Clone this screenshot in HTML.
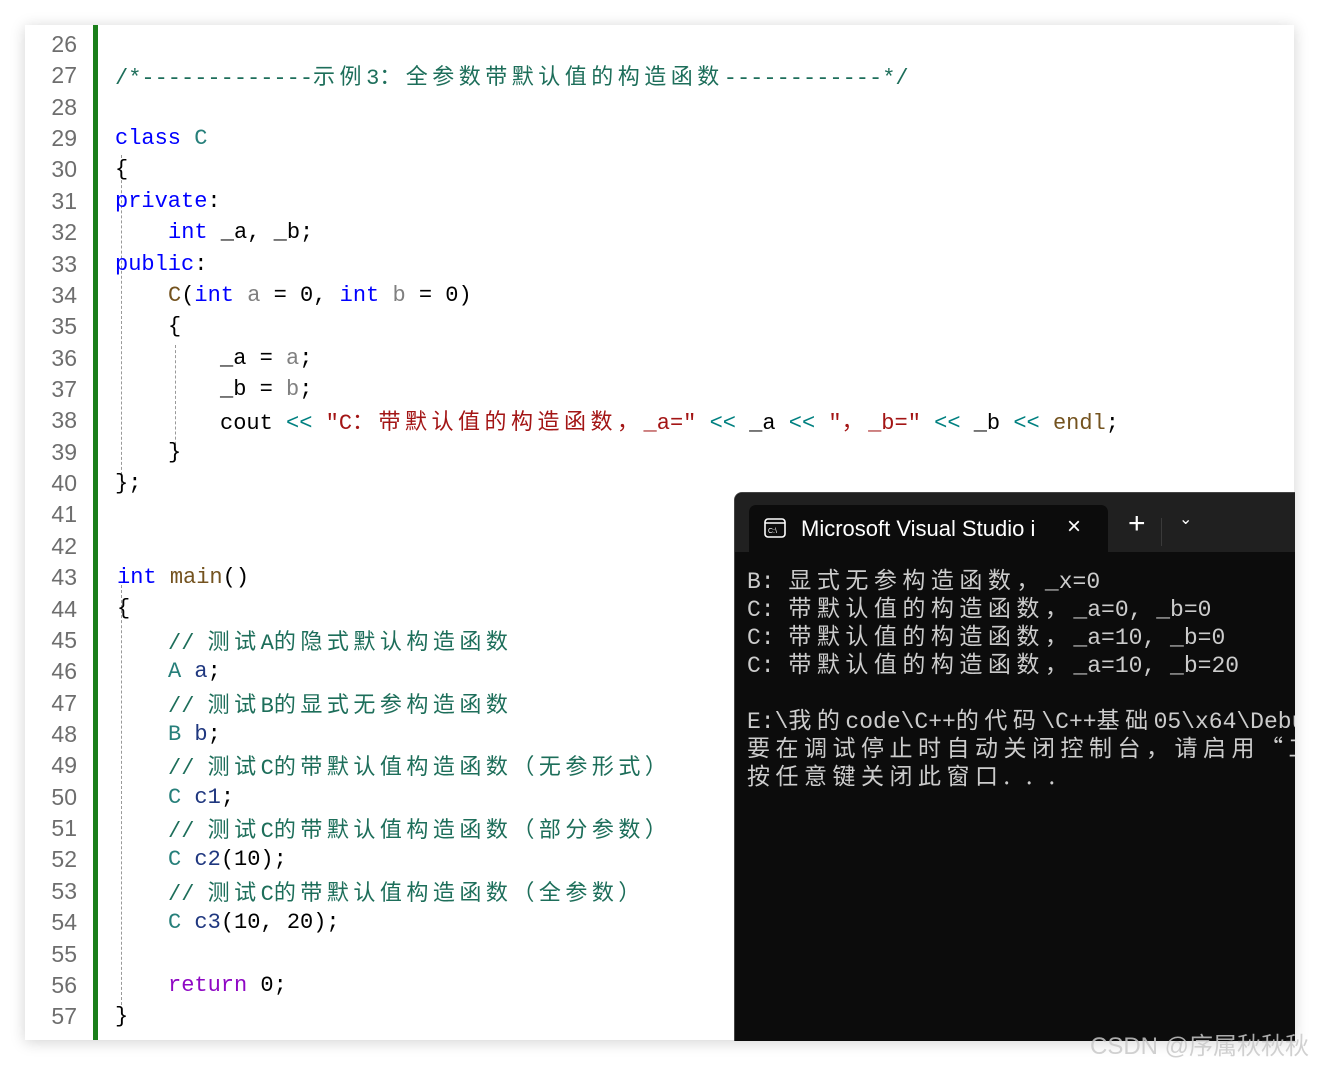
<!DOCTYPE html>
<html><head><meta charset="utf-8"><style>
body{margin:0;width:1319px;height:1065px;background:#fff;position:relative;overflow:hidden;font-family:"Liberation Mono","Noto Sans CJK SC",monospace}
.card{position:absolute;left:25px;top:25px;width:1269px;height:1015px;background:#fff;box-shadow:0 2px 14px rgba(0,0,0,.18);overflow:hidden}
.ln{position:absolute;left:0;width:52px;text-align:right;color:#6e6e6e;font-family:"Liberation Sans",sans-serif;font-size:23px;line-height:31px}
.l{position:absolute;white-space:pre;font-size:22px;line-height:31px;color:#000}
.c{letter-spacing:4.5px;font-family:"Noto Sans CJK SC",sans-serif;font-size:22px}
.kw{color:#0000ff}.ty{color:#267f7a}.cm{color:#1d6e5a}.st{color:#a31515}.pa{color:#808080}.fn{color:#74531f}.op{color:#008080}.rt{color:#8f08c4}.va{color:#1f377f}
.bar{position:absolute;left:68px;top:0;width:5px;height:1015px;background:#1a7f1a}
.guide{position:absolute;border-left:1px dashed #999}
.term{position:absolute;left:734px;top:492px;width:560px;height:548px;background:#0c0c0c;border-radius:8px 0 0 0;border:1px solid #444;border-right:0;border-bottom:0;overflow:hidden}
.tb{position:absolute;left:0;top:0;right:0;height:59px;background:#202020;border-radius:8px 0 0 0}
.tab{position:absolute;left:14px;top:12px;width:359px;height:47px;background:#0c0c0c;border-radius:7px 7px 0 0}
.tt{position:absolute;color:#fff;font-family:"Liberation Sans",sans-serif;font-size:22px}
.out{position:absolute;left:12px;white-space:pre;color:#ccc;font-size:23px;line-height:28px;font-family:"Liberation Mono","Noto Sans CJK SC",monospace}
.out .c{font-size:23px;letter-spacing:5.5px}
</style></head><body>
<div class="card">
<div class="bar"></div>
<div class="guide" style="left:96px;top:130px;height:330px"></div>
<div class="guide" style="left:96px;top:560px;height:420px"></div>
<div class="guide" style="left:150px;top:320px;height:115px"></div>
</div>
<div style="position:absolute;left:25px;top:25px">
<div class="ln" style="top:4px">26</div><div class="ln" style="top:35px">27</div><div class="ln" style="top:67px">28</div><div class="ln" style="top:98px">29</div><div class="ln" style="top:129px">30</div><div class="ln" style="top:161px">31</div><div class="ln" style="top:192px">32</div><div class="ln" style="top:224px">33</div><div class="ln" style="top:255px">34</div><div class="ln" style="top:286px">35</div><div class="ln" style="top:318px">36</div><div class="ln" style="top:349px">37</div><div class="ln" style="top:380px">38</div><div class="ln" style="top:412px">39</div><div class="ln" style="top:443px">40</div><div class="ln" style="top:474px">41</div><div class="ln" style="top:506px">42</div><div class="ln" style="top:537px">43</div><div class="ln" style="top:569px">44</div><div class="ln" style="top:600px">45</div><div class="ln" style="top:631px">46</div><div class="ln" style="top:663px">47</div><div class="ln" style="top:694px">48</div><div class="ln" style="top:725px">49</div><div class="ln" style="top:757px">50</div><div class="ln" style="top:788px">51</div><div class="ln" style="top:819px">52</div><div class="ln" style="top:851px">53</div><div class="ln" style="top:882px">54</div><div class="ln" style="top:914px">55</div><div class="ln" style="top:945px">56</div><div class="ln" style="top:976px">57</div>
</div>
<div class="l cm" style="left:115px;top:60px">/*-------------<span class="c">示例</span>3<span class="c">：全参数带默认值的构造函数</span>------------*/</div>
<div class="l" style="left:115px;top:123px"><span class="kw">class</span> <span class="ty">C</span></div>
<div class="l" style="left:115px;top:154px">{</div>
<div class="l kw" style="left:115px;top:186px">private<span style="color:#000">:</span></div>
<div class="l" style="left:168px;top:217px"><span class="kw">int</span> _a, _b;</div>
<div class="l kw" style="left:115px;top:249px">public<span style="color:#000">:</span></div>
<div class="l" style="left:168px;top:280px"><span class="fn">C</span>(<span class="kw">int</span> <span class="pa">a</span> = 0, <span class="kw">int</span> <span class="pa">b</span> = 0)</div>
<div class="l" style="left:168px;top:311px">{</div>
<div class="l" style="left:220px;top:343px">_a = <span class="pa">a</span>;</div>
<div class="l" style="left:220px;top:374px">_b = <span class="pa">b</span>;</div>
<div class="l" style="left:220px;top:405px">cout <span class="op">&lt;&lt;</span> <span class="st">"C<span class="c">：带默认值的构造函数，</span>_a="</span> <span class="op">&lt;&lt;</span> _a <span class="op">&lt;&lt;</span> <span class="st">"<span class="c">，</span>_b="</span> <span class="op">&lt;&lt;</span> _b <span class="op">&lt;&lt;</span> <span class="fn">endl</span>;</div>
<div class="l" style="left:168px;top:437px">}</div>
<div class="l" style="left:115px;top:468px">};</div>
<div class="l" style="left:117px;top:562px"><span class="kw">int</span> <span class="fn">main</span>()</div>
<div class="l" style="left:117px;top:593px">{</div>
<div class="l cm" style="left:168px;top:625px">// <span class="c">测试</span>A<span class="c">的隐式默认构造函数</span></div>
<div class="l" style="left:168px;top:656px"><span class="ty">A</span> <span class="va">a</span>;</div>
<div class="l cm" style="left:168px;top:688px">// <span class="c">测试</span>B<span class="c">的显式无参构造函数</span></div>
<div class="l" style="left:168px;top:719px"><span class="ty">B</span> <span class="va">b</span>;</div>
<div class="l cm" style="left:168px;top:750px">// <span class="c">测试</span>C<span class="c">的带默认值构造函数（无参形式）</span></div>
<div class="l" style="left:168px;top:782px"><span class="ty">C</span> <span class="va">c1</span>;</div>
<div class="l cm" style="left:168px;top:813px">// <span class="c">测试</span>C<span class="c">的带默认值构造函数（部分参数）</span></div>
<div class="l" style="left:168px;top:844px"><span class="ty">C</span> <span class="va">c2</span>(10);</div>
<div class="l cm" style="left:168px;top:876px">// <span class="c">测试</span>C<span class="c">的带默认值构造函数（全参数）</span></div>
<div class="l" style="left:168px;top:907px"><span class="ty">C</span> <span class="va">c3</span>(10, 20);</div>
<div class="l" style="left:168px;top:970px"><span class="rt">return</span> 0;</div>
<div class="l" style="left:115px;top:1001px">}</div>
<div class="term">
<div class="tb"><div class="tab">
<svg style="position:absolute;left:15px;top:13px" width="22" height="20" viewBox="0 0 22 20"><rect x="1" y="1" width="20" height="18" rx="3" fill="none" stroke="#fff" stroke-width="1.6"/><line x1="1" y1="5" x2="21" y2="5" stroke="#fff" stroke-width="1.4"/><text x="4" y="15" fill="#fff" font-size="7" font-family="Liberation Sans">C:\</text></svg>
<div class="tt" style="left:52px;top:11px">Microsoft Visual Studio i</div>
<div class="tt" style="left:318px;top:8px;font-size:24px">×</div>
</div>
<div class="tt" style="left:393px;top:14px;font-size:30px;font-weight:300">+</div>
<div style="position:absolute;left:426px;top:25px;width:1px;height:28px;background:#3a3a3a"></div>
<div class="tt" style="left:444px;top:16px;font-size:16px">⌄</div>
</div>
<div class="out" style="top:71px">B: <span class="c">显式无参构造函数，</span>_x=0</div>
<div class="out" style="top:99px">C: <span class="c">带默认值的构造函数，</span>_a=0, _b=0</div>
<div class="out" style="top:127px">C: <span class="c">带默认值的构造函数，</span>_a=10, _b=0</div>
<div class="out" style="top:155px">C: <span class="c">带默认值的构造函数，</span>_a=10, _b=20</div>
<div class="out" style="top:211px">E:\<span class="c">我的</span>code\C++<span class="c">的代码</span>\C++<span class="c">基础</span>05\x64\Debug</div>
<div class="out" style="top:239px"><span class="c">要在调试停止时自动关闭控制台，请启用“工具</span></div>
<div class="out" style="top:267px"><span class="c">按任意键关闭此窗口. . .</span></div>
</div>
<div style="position:absolute;left:1090px;top:1026px;font-family:'Liberation Sans','Noto Sans CJK SC',sans-serif;font-size:24px;color:rgba(200,200,200,.85)">CSDN @序属秋秋秋</div>
</body></html>
